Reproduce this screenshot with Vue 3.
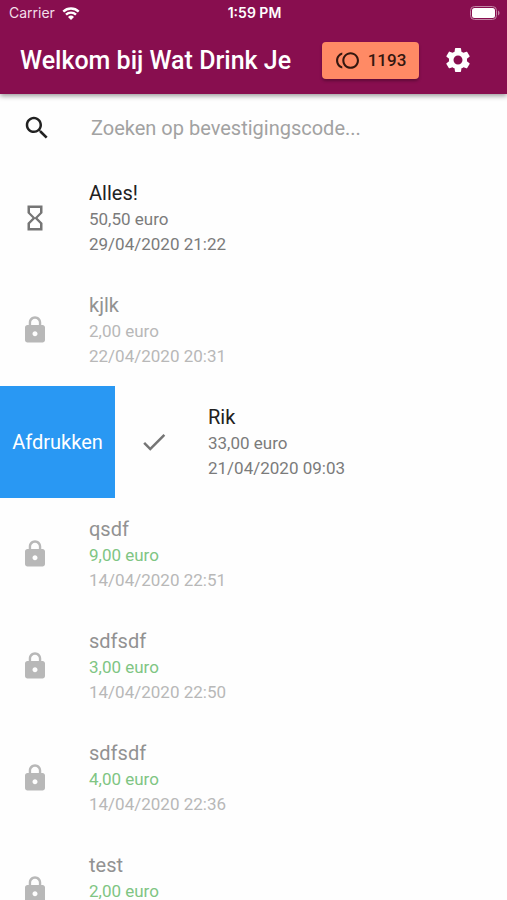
<script setup>
import { ref } from 'vue'

const query = ref('')

const orders = [
  { name: 'Alles!', price: '50,50 euro', date: '29/04/2020 21:22', icon: 'hourglass' },
  { name: 'kjlk', price: '2,00 euro', date: '22/04/2020 20:31', icon: 'lock', closed: true },
  { name: 'Rik', price: '33,00 euro', date: '21/04/2020 09:03', icon: 'check', open: true },
  { name: 'qsdf', price: '9,00 euro', date: '14/04/2020 22:51', icon: 'lock', closed: true, paid: true },
  { name: 'sdfsdf', price: '3,00 euro', date: '14/04/2020 22:50', icon: 'lock', closed: true, paid: true },
  { name: 'sdfsdf', price: '4,00 euro', date: '14/04/2020 22:36', icon: 'lock', closed: true, paid: true },
  { name: 'test', price: '2,00 euro', icon: 'lock', closed: true, paid: true },
]

const icons = {
  hourglass:
    'M6 2v6h.01L6 8.01 10 12l-4 4 .01.01H6V22h12v-5.99h-.01L18 16l-4-4 4-3.99-.01-.01H18V2H6zm10 14.5V20H8v-3.5l4-4 4 4zm-4-5l-4-4V4h8v3.5l-4 4z',
  lock:
    'M18 8h-1V6c0-2.760-2.240-5-5-5S7 3.240 7 6v2H6c-1.100 0-2 .9-2 2v10c0 1.100.9 2 2 2h12c1.100 0 2-.9 2-2V10c0-1.100-.9-2-2-2zm-6 9c-1.100 0-2-.9-2-2s.9-2 2-2 2 .9 2 2-.9 2-2 2zm3.100-9H8.900V6c0-1.710 1.390-3.100 3.100-3.100s3.100 1.390 3.100 3.100v2z',
  check: 'M9 16.170L4.830 12l-1.420 1.410L9 19 21 7l-1.410-1.410z',
}
</script>

<template>
  <div class="screen">
    <header class="top">
      <div class="status">
        <span class="carrier">
          Carrier
          <svg class="wifi" viewBox="0 0 18 13" aria-hidden="true">
            <path d="M1.300 4.700a11 11 0 0 1 15.400 0" />
            <path d="M4 7.600a7.200 7.200 0 0 1 10 0" />
            <path class="dot" d="M9 13l3-3a4.300 4.300 0 0 0-6 0z" />
          </svg>
        </span>
        <span class="time">1:59 PM</span>
        <span class="power">
          <svg class="battery" viewBox="0 0 30 14" aria-hidden="true">
            <rect class="shell" x="0.500" y="0.500" width="26" height="13" rx="4" />
            <rect class="charge" x="2" y="2" width="23" height="10" rx="2.500" />
            <path class="cap" d="M28 4.500c2 .8 2 4.200 0 5z" />
          </svg>
        </span>
      </div>
      <div class="bar">
        <h1>Welkom bij Wat Drink Je</h1>
        <button class="tokens" type="button">
          <svg class="coin" viewBox="0 0 24 24" aria-hidden="true">
            <path d="M15 4c-4.420 0-8 3.580-8 8s3.580 8 8 8 8-3.580 8-8-3.580-8-8-8zm0 14c-3.310 0-6-2.690-6-6s2.690-6 6-6 6 2.690 6 6-2.690 6-6 6zM3 12c0-2.610 1.670-4.830 4-5.650V4.260C3.550 5.150 1 8.270 1 12s2.550 6.850 6 7.740v-2.090c-2.330-.82-4-3.040-4-5.650z" />
          </svg>
          1193
        </button>
        <button class="settings" type="button" aria-label="Instellingen">
          <svg class="gear" viewBox="0 0 24 24" aria-hidden="true">
            <path d="M19.140 12.940c.04-.3.06-.61.06-.94 0-.32-.02-.64-.07-.94l2.030-1.580c.18-.14.23-.41.12-.61l-1.920-3.320c-.12-.22-.37-.29-.59-.22l-2.390.96c-.5-.38-1.030-.7-1.620-.94l-.36-2.540c-.04-.24-.24-.41-.48-.41h-3.840c-.24 0-.43.17-.47.41l-.36 2.540c-.59.24-1.130.57-1.620.94l-2.390-.96c-.22-.08-.47 0-.59.22L2.740 8.870c-.12.21-.08.47.12.61l2.030 1.580c-.05.3-.09.63-.09.94s.02.64.07.94l-2.030 1.580c-.18.14-.23.41-.12.61l1.920 3.320c.12.22.37.29.59.22l2.390-.96c.5.38 1.030.7 1.620.94l.36 2.540c.05.24.24.41.48.41h3.840c.24 0 .44-.17.47-.41l.36-2.540c.59-.24 1.130-.56 1.620-.94l2.390.96c.22.08.47 0 .59-.22l1.920-3.320c.12-.22.07-.47-.12-.61l-2.010-1.580zM12 15.600c-1.980 0-3.600-1.620-3.600-3.600s1.620-3.600 3.600-3.600 3.600 1.620 3.600 3.600-1.620 3.600-3.600 3.600z" />
          </svg>
        </button>
      </div>
    </header>

    <main>
      <label class="search">
        <svg class="glass" viewBox="0 0 24 24" aria-hidden="true">
          <path d="M15.500 14h-.79l-.28-.27C15.410 12.590 16 11.110 16 9.500 16 5.910 13.090 3 9.500 3S3 5.910 3 9.500 5.910 16 9.500 16c1.610 0 3.090-.59 4.230-1.570l.27.28v.79l5 4.990L20.490 19l-4.990-5zm-6 0C7.010 14 5 11.990 5 9.500S7.010 5 9.500 5 14 7.010 14 9.500 11.990 14 9.500 14z" />
        </svg>
        <input v-model="query" type="text" aria-label="Zoeken" placeholder="Zoeken op bevestigingscode..." />
      </label>

      <ul class="orders">
        <li v-for="(order, i) in orders" :key="i" class="row">
          <button v-if="order.open" class="print" type="button">Afdrukken</button>
          <div class="order" :class="{ closed: order.closed, paid: order.paid }">
            <svg class="state" viewBox="0 0 24 24" aria-hidden="true">
              <path :d="icons[order.icon]" />
            </svg>
            <div class="details">
              <p class="name">{{ order.name }}</p>
              <p class="price">{{ order.price }}</p>
              <p class="date">{{ order.date }}</p>
            </div>
          </div>
        </li>
      </ul>
    </main>
  </div>
</template>

<style>
body {
  margin: 0;
  background: #fefefe;
}
</style>

<style scoped>
.screen {
  height: 100vh;
  display: flex;
  flex-direction: column;
  overflow: hidden;
  font-family: Roboto, 'Liberation Sans', sans-serif;
  color: #212121;
}

button {
  border: 0;
  padding: 0;
  font: inherit;
  cursor: pointer;
}

svg {
  flex: none;
  fill: currentColor;
}

.top {
  position: relative;
  flex: none;
  background: #880e4f;
  color: #fff;
  box-shadow: 0 2px 5px rgba(0, 0, 0, 0.4);
}

.status {
  display: grid;
  grid-template-columns: 1fr auto 1fr;
  align-items: center;
  height: 26px;
  padding: 0 7px 0 9px;
  font-family: Inter, 'Liberation Sans', sans-serif;
  font-size: 14px;
  line-height: 26px;
}

.carrier {
  display: flex;
  align-items: center;
  gap: 7px;
  color: #f3dfe9;
}

.wifi {
  width: 18px;
  height: 13px;
  color: #fff;
  fill: none;
  stroke: currentColor;
  stroke-width: 2.4;
}

.wifi .dot {
  fill: currentColor;
  stroke: none;
}

.time {
  font-weight: 600;
}

.power {
  display: flex;
  justify-content: flex-end;
}

.battery {
  width: 30px;
  height: 14px;
}

.shell {
  fill: none;
  stroke: #c286a6;
}

.cap {
  fill: #c286a6;
}

.bar {
  display: flex;
  align-items: center;
  height: 68px;
  padding: 0 34px 0 20px;
}

h1 {
  flex: 1;
  margin: 0;
  font-size: 25px;
  font-weight: 500;
  white-space: nowrap;
}

.tokens {
  display: flex;
  align-items: center;
  justify-content: center;
  gap: 8px;
  width: 97px;
  height: 37px;
  margin-right: 24px;
  border-radius: 4px;
  background: #ff8a65;
  color: #33170f;
  font-size: 17px;
  font-weight: 500;
  box-shadow: 0 2px 3px rgba(0, 0, 0, 0.3);
}

.coin {
  width: 25px;
  height: 25px;
}

.settings {
  display: flex;
  background: none;
  color: #fff;
}

.gear {
  width: 30px;
  height: 30px;
}

.search {
  display: flex;
  align-items: center;
  gap: 39px;
  padding: 19px 22px;
}

.glass {
  width: 30px;
  height: 30px;
}

.search input {
  flex: 1;
  min-width: 0;
  padding: 0;
  border: 0;
  outline: 0;
  background: none;
  color: inherit;
  font: inherit;
  font-size: 20px;
}

.search input::placeholder {
  color: #a2a2a2;
  opacity: 1;
}

.orders {
  margin: 0;
  padding: 0;
  list-style: none;
}

.row {
  display: flex;
  gap: 4px;
  height: 112px;
}

.print {
  width: 115px;
  background: #2998f3;
  color: #fff;
  font-size: 20px;
}

.order {
  flex: 1;
  display: flex;
  align-items: center;
  gap: 39px;
  padding: 0 20px;
}

.state {
  width: 30px;
  height: 30px;
  color: #757575;
}

.details p {
  margin: 0;
}

.details .name {
  font-size: 20px;
  line-height: 28px;
}

.details .price,
.details .date {
  min-height: 25px;
  color: #7b7b7b;
  font-size: 17px;
  line-height: 25px;
}

.closed .state,
.closed .details .date,
.closed .details .price {
  color: #b8b8b8;
}

.closed .name {
  color: #929292;
}

.paid .details .price {
  color: #7fc583;
}
</style>
